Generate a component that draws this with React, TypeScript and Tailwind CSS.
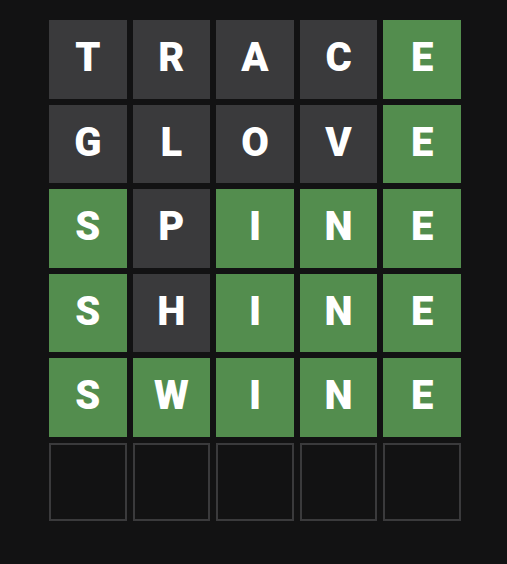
import React from "react";

const rows: { l: string; s: ("g" | "x" | "e")[] }[] = [
  { l: "TRACE", s: ["x", "x", "x", "x", "g"] },
  { l: "GLOVE", s: ["x", "x", "x", "x", "g"] },
  { l: "SPINE", s: ["g", "x", "g", "g", "g"] },
  { l: "SHINE", s: ["g", "x", "g", "g", "g"] },
  { l: "SWINE", s: ["g", "g", "g", "g", "g"] },
  { l: "     ", s: ["e", "e", "e", "e", "e"] },
];

export default function App() {
  return (
    <div className="w-[507px] h-[564px] bg-[#121213] pt-[20px] pl-[49px]">
      <div className="grid w-[412px] h-[501px] grid-cols-5 grid-rows-6 gap-x-[6px] gap-y-[6px]">
        {rows.flatMap((r, ri) =>
          r.s.map((st, ci) => (
            <div
              key={`${ri}-${ci}`}
              className={
                st === "g"
                  ? "flex items-center justify-center bg-[#538d4e] text-white font-black text-[40px] pb-[2px]"
                  : st === "x"
                  ? "flex items-center justify-center bg-[#3a3a3c] text-white font-black text-[40px] pb-[2px]"
                  : "flex items-center justify-center border-2 border-[#3a3a3c] bg-[#121213]"
              }
              style={{ fontFamily: 'Roboto, "Liberation Sans", Arial, sans-serif' }}
            >
              {r.l[ci].trim()}
            </div>
          ))
        )}
      </div>
    </div>
  );
}
